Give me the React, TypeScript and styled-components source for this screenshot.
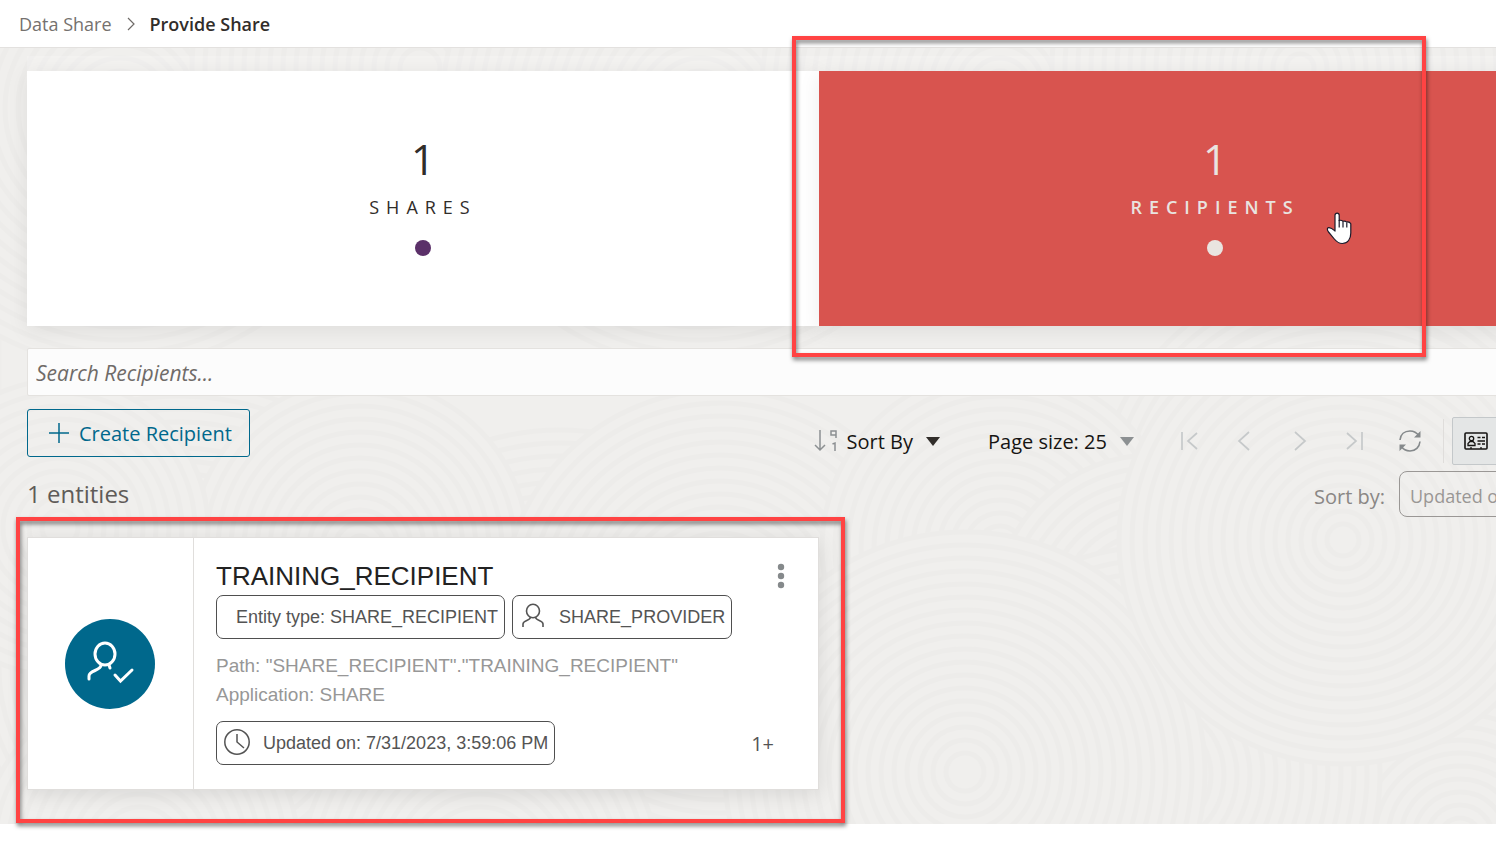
import React from "react";
import styled, { createGlobalStyle } from "styled-components";

const Global = createGlobalStyle`
  *, *::before, *::after { box-sizing: border-box; }
  html, body { margin: 0; padding: 0; }
  body {
    min-height: 100vh;
    background: #fff;
    color: #312d2a;
    font-family: "Open Sans", "Noto Sans", sans-serif;
    font-size: 20px;
  }
  button, input, select { font-family: inherit; margin: 0; }
`;

const Page = styled.div`
  min-height: 100vh;
  overflow-x: clip;
`;

const TopBar = styled.header`
  height: 48px;
  display: flex;
  align-items: center;
  padding: 0 19px;
  background: #fff;
  border-bottom: 1px solid #e3e1df;
`;

const Crumbs = styled.nav`
  display: flex;
  align-items: center;
  gap: 14px;
  font-size: 18px;
  line-height: 24px;
`;

const CrumbLink = styled.a`
  color: #75716e;
  text-decoration: none;
`;

const CrumbCurrent = styled.span`
  color: #312d2a;
  font-weight: 600;
`;

const Main = styled.main`
  position: relative;
  padding: 8px 0 34px 27px;
  background: #f0efed;
  box-shadow: inset 0 8px 8px -4px rgba(0, 0, 0, 0.06);
`;

const Backdrop = styled.svg`
  position: absolute;
  inset: 0;
  width: 100%;
  height: 100%;
`;

/* The content column runs past the right edge of the window. */
const Content = styled.div`
  position: relative;
  margin-right: -115px;
`;

const Tiles = styled.section`
  display: grid;
  grid-template-columns: 1fr 1fr;
  padding-top: 15px;
  background: rgba(255, 255, 255, 0.2);
`;

const Tile = styled.div<{ $active?: boolean }>`
  position: relative;
  height: 255px;
  padding-top: 64px;
  display: flex;
  flex-direction: column;
  align-items: center;
  background: ${(p) => (p.$active ? "#d8544f" : "#fff")};
  color: ${(p) => (p.$active ? "#e9e4e0" : "#312d2a")};
  font-weight: ${(p) => (p.$active ? 600 : 500)};
  box-shadow: 0 4px 20px rgba(0, 0, 0, 0.08);
`;

const TileCount = styled.span`
  font-size: 42px;
  line-height: 48px;
  font-weight: 400;
`;

const TileLabel = styled.span`
  margin-top: 12px;
  font-size: 18px;
  line-height: 24px;
  letter-spacing: 7px;
`;

const TileDot = styled.span<{ $color: string }>`
  width: 16px;
  height: 16px;
  margin-top: 21px;
  border-radius: 50%;
  background: ${(p) => p.$color};
`;

const Search = styled.input`
  display: block;
  width: 100%;
  height: 48px;
  margin-top: 22px;
  padding: 1px 8px 0;
  border: 1px solid #e4e2df;
  border-radius: 2px;
  background: #fcfcfc;
  font-size: 21px;
  font-style: italic;
  &::placeholder { color: #6f6b68; opacity: 1; }
`;

const Controls = styled.div`
  display: flex;
  justify-content: space-between;
  margin-top: 13px;
  height: 129px;
`;

const CreateButton = styled.button`
  display: flex;
  align-items: center;
  gap: 9px;
  height: 48px;
  padding: 0 17px 0 20px;
  border: 1px solid #00688c;
  border-radius: 3px;
  background: transparent;
  color: #00688c;
  font-size: 20px;
`;

const EntityCount = styled.p`
  margin: 21px 0 0;
  color: #5f5b58;
  font-size: 24px;
  line-height: 32px;
`;

const ToolColumn = styled.div`
  display: flex;
  flex-direction: column;
  align-items: flex-end;
  gap: 6px;
  padding-top: 8px;
`;

const Toolbar = styled.div`
  display: flex;
  align-items: center;
  height: 48px;
  padding-right: 111px;
`;

const MenuButton = styled.button`
  display: flex;
  align-items: center;
  gap: 9px;
  margin-right: 48px;
  padding: 0;
  border: 0;
  background: none;
  color: #161513;
  font-size: 20px;
`;

const Caret = styled.span<{ $color: string }>`
  margin-left: 4px;
  border: 7px solid transparent;
  border-top: 9px solid ${(p) => p.$color};
  border-bottom: 0;
`;

const PageSize = styled.label`
  display: flex;
  align-items: center;
  gap: 9px;
  margin-right: 28px;
`;

const PlainSelect = styled.select`
  appearance: none;
  padding: 0;
  border: 0;
  background: none;
  color: #161513;
  font-size: 20px;
`;

const NavButton = styled.button`
  display: flex;
  align-items: center;
  justify-content: center;
  width: 55px;
  height: 48px;
  padding: 0;
  border: 0;
  background: none;
`;

const Divider = styled.span`
  width: 1px;
  height: 44px;
  margin: 0 8px 0 6px;
  background: #dfdddb;
`;

const ViewButton = styled.button`
  display: flex;
  align-items: center;
  justify-content: center;
  width: 48px;
  height: 48px;
  padding: 0;
  border: 1px solid #c4c8ca;
  border-radius: 2px 0 0 2px;
  background: #e4e6e6;
`;

const SortRow = styled.div`
  display: flex;
  align-items: center;
  gap: 14px;
`;

const SortLabel = styled.label`
  padding-top: 5px;
  color: #8a8785;
  font-size: 20px;
`;

const SortSelect = styled.select`
  appearance: none;
  width: 212px;
  height: 46px;
  padding: 3px 10px 0;
  border: 1px solid #9a9795;
  border-radius: 8px;
  background: transparent;
  color: #9a9795;
  font-size: 18px;
`;

const Card = styled.article`
  position: relative;
  display: flex;
  width: 50%;
  margin-top: -1px;
  border: 1px solid #e0dedc;
  background: #fff;
  box-shadow: 0 4px 20px rgba(0, 0, 0, 0.1);
  font-family: "Liberation Sans", Arial, sans-serif;
`;

const CardSide = styled.div`
  display: flex;
  align-items: center;
  justify-content: center;
  width: 166px;
  padding-right: 1px;
  border-right: 1px solid #e0dedc;
`;

const Avatar = styled.span`
  display: flex;
  align-items: center;
  justify-content: center;
  width: 90px;
  height: 90px;
  border-radius: 50%;
  background: #00688c;
`;

const CardBody = styled.div`
  flex: 1;
  padding: 22px 33px 24px 22px;
`;

const CardHead = styled.div`
  display: flex;
  align-items: center;
  justify-content: space-between;
`;

const CardTitle = styled.h2`
  margin: 0;
  color: #222;
  font-size: 26px;
  font-weight: 400;
  line-height: 32px;
`;

const KebabButton = styled.button`
  display: flex;
  padding: 0;
  border: 0;
  background: none;
`;

const ChipRow = styled.div`
  display: flex;
  gap: 7px;
  margin-top: 3px;
`;

const Chip = styled.span<{ $gap?: number; $inset?: number }>`
  display: flex;
  align-items: center;
  gap: ${(p) => p.$gap ?? 0}px;
  height: 44px;
  padding: 0 6px 0 ${(p) => p.$inset ?? 6}px;
  border: 1px solid #4f4f4f;
  border-radius: 7px;
  color: #545454;
  font-size: 18px;
  white-space: nowrap;
`;

const Meta = styled.p`
  margin: 12px 0;
  color: #979797;
  font-size: 19px;
  line-height: 29px;
`;

const CardFoot = styled.div`
  display: flex;
  align-items: center;
  justify-content: space-between;
  padding-right: 11px;
`;

const More = styled.span`
  color: #545454;
  font-family: "Open Sans", sans-serif;
  font-size: 20px;
`;

const Highlight = styled.div<{ $wide?: boolean }>`
  position: absolute;
  z-index: 2;
  top: ${(p) => (p.$wide ? -21 : -35)}px;
  left: ${(p) => (p.$wide ? -12 : -27)}px;
  width: ${(p) => (p.$wide ? "calc(100% + 39px)" : "80%")};
  height: ${(p) => (p.$wide ? 306 : 321)}px;
  border: 4px solid #ff4343;
  filter: drop-shadow(1px 3px 2px rgba(0, 0, 0, 0.5));
  pointer-events: none;
`;

const Pointer = styled.svg`
  position: absolute;
  top: 140px;
  left: 507px;
`;

/* Overlapping ripple discs, painted back to front: x, y, radius. */
const RIPPLES = [
  [120, 60, 260], [420, 20, 230], [700, 60, 260], [1000, 40, 240], [1300, 20, 250],
  [180, 620, 300], [560, 640, 260], [360, 500, 170], [720, 560, 220], [60, 480, 150],
  [1343, 470, 250], [1000, 500, 180], [1152, 565, 160], [1460, 790, 230],
  [1152, 727, 230], [965, 724, 242], [1343, 492, 226],
  [140, 800, 160], [480, 820, 180],
];

function Ripples() {
  return (
    <Backdrop aria-hidden="true">
      {RIPPLES.map(([x, y, r], i) => (
        <g key={i} fill="none" stroke="#edecea" strokeWidth="5">
          <circle cx={x} cy={y} r={r} fill="#f0efed" stroke="none" />
          {Array.from({ length: Math.floor(r / 13) }, (_, k) => (
            <circle key={k} cx={x} cy={y} r={r - k * 13 - 2} />
          ))}
        </g>
      ))}
    </Backdrop>
  );
}

const NAV_ICONS = [
  { label: "First page", d: "M3 2v18M18 3l-9 8 9 8" },
  { label: "Previous page", d: "M15 2L5 11l10 9" },
  { label: "Next page", d: "M6 2l10 9-10 9" },
  { label: "Last page", d: "M3 3l9 8-9 8M18 2v18" },
];

export default function App() {
  return (
    <Page>
      <Global />
      <TopBar>
        <Crumbs aria-label="Breadcrumb">
          <CrumbLink href="#data-share">Data Share</CrumbLink>
          <svg width="10" height="16" viewBox="0 0 10 16" fill="none" stroke="#6f6b68" strokeWidth="1.2">
            <path d="M2 2l6 6-6 6" />
          </svg>
          <CrumbCurrent aria-current="page">Provide Share</CrumbCurrent>
        </Crumbs>
      </TopBar>
      <Main>
        <Ripples />
        <Content>
          <Tiles>
            <Tile>
              <TileCount>1</TileCount>
              <TileLabel>SHARES</TileLabel>
              <TileDot $color="#5b3069" />
            </Tile>
            <Tile $active>
              <TileCount>1</TileCount>
              <TileLabel>RECIPIENTS</TileLabel>
              <TileDot $color="#e9e4e0" />
              <Pointer width="26" height="34" viewBox="0 0 26 34" aria-hidden="true">
                <path
                  d="M9 20V4.200a2 2 0 0 1 4.200 0V9.500q2-.8 3.800.8 2-.8 3.800.8 2.600-.6 4 1.700V22c0 6-3 10.500-8.500 10.500-4 0-6-2-8-4.500L2.500 21C.8 18.600 1 16.500 3 16.700c2.400.2 4 1.600 6 3.300z"
                  fill="#fff" stroke="#1a1a2a" strokeWidth="1.200" strokeLinejoin="round"
                />
                <path d="M13.200 9v7.500M17 10.500v6M20.800 11.500v5" fill="none" stroke="#1a1a2a" strokeWidth="1.200" />
              </Pointer>
              <Highlight />
            </Tile>
          </Tiles>

          <Search type="search" aria-label="Search Recipients" placeholder="Search Recipients..." />

          <Controls>
            <div>
              <CreateButton type="button">
                <svg width="22" height="22" viewBox="0 0 22 22" stroke="#00688c" strokeWidth="1.500">
                  <path d="M11 1v20M1 11h20" />
                </svg>
                Create Recipient
              </CreateButton>
              <EntityCount>1 entities</EntityCount>
            </div>
            <ToolColumn>
              <Toolbar>
                <MenuButton type="button" aria-haspopup="menu">
                  <svg width="24" height="24" viewBox="0 0 24 24" fill="none" stroke="#8c9092" strokeWidth="1.500">
                    <path d="M6 1v20M1 16l5 5 5-5M22 9V2h-5v4h5M18.500 15l2.500-1v8" />
                  </svg>
                  Sort By
                  <Caret $color="#312d2a" />
                </MenuButton>
                <PageSize>
                  <PlainSelect aria-label="Page size" defaultValue="25">
                    <option value="25">Page size: 25</option>
                  </PlainSelect>
                  <Caret $color="#8c9092" />
                </PageSize>
                {NAV_ICONS.map((icon) => (
                  <NavButton key={icon.label} type="button" aria-label={icon.label}>
                    <svg width="22" height="22" viewBox="0 0 22 22" fill="none" stroke="#c6c9ca" strokeWidth="1.700">
                      <path d={icon.d} />
                    </svg>
                  </NavButton>
                ))}
                <NavButton type="button" aria-label="Refresh">
                  <svg width="24" height="24" viewBox="0 0 24 24" fill="none" stroke="#85898b" strokeWidth="1.600">
                    <path d="M2 11C2.500 5.500 6.500 2 12 2c4 0 7 2 9 5M22 12.500C21.500 18 17.500 22 12 22c-4 0-7-2-9-5" />
                    <path d="M22.500 2v6.500H16zM1.500 22v-6.500H8z" fill="#85898b" stroke="none" />
                  </svg>
                </NavButton>
                <Divider />
                <ViewButton type="button" aria-label="Card view" aria-pressed="true">
                  <svg width="24" height="18" viewBox="0 0 24 18" fill="none" stroke="#161513" strokeWidth="1.300">
                    <rect x="1" y="1" width="22" height="16" rx="1" strokeWidth="1.600" />
                    <circle cx="7.500" cy="6.500" r="2.200" />
                    <path d="M4 13.500v-2l2-2h3l2 2v2zM13.500 5.500h3M18 5.500h3M13.500 9h7.500M13.500 12h3M18 12h3M7 15v2M17 15v2" />
                  </svg>
                </ViewButton>
              </Toolbar>
              <SortRow>
                <SortLabel htmlFor="entity-sort">Sort by:</SortLabel>
                <SortSelect id="entity-sort" defaultValue="updated">
                  <option value="updated">Updated on</option>
                </SortSelect>
              </SortRow>
            </ToolColumn>
          </Controls>

          <Card>
            <CardSide>
              <Avatar>
                <svg width="50" height="46" viewBox="0 0 50 46" fill="none" stroke="#fff" strokeWidth="3" strokeLinecap="round">
                  <ellipse cx="20" cy="13" rx="10" ry="11" />
                  <path d="M16 24c0 6-12 5-12 11v3M24 24l1 3M30 34l5.500 6L47 29" />
                </svg>
              </Avatar>
            </CardSide>
            <CardBody>
              <CardHead>
                <CardTitle>TRAINING_RECIPIENT</CardTitle>
                <KebabButton type="button" aria-label="Actions">
                  <svg width="8" height="26" viewBox="0 0 8 26" fill="#85898b">
                    <circle cx="4" cy="4" r="3.200" />
                    <circle cx="4" cy="13" r="3.200" />
                    <circle cx="4" cy="22" r="3.200" />
                  </svg>
                </KebabButton>
              </CardHead>
              <ChipRow>
                <Chip $inset={19}>Entity type: SHARE_RECIPIENT</Chip>
                <Chip $inset={9} $gap={15}>
                  <svg width="22" height="28" viewBox="0 0 22 28" fill="none" stroke="#545454" strokeWidth="1.600">
                    <ellipse cx="11" cy="8" rx="6.500" ry="6.700" />
                    <path d="M8.500 14c0 4-7.500 3-7.500 7v3M13.500 14c0 4 7.500 3 7.500 7v3" />
                  </svg>
                  SHARE_PROVIDER
                </Chip>
              </ChipRow>
              <Meta>
                Path: "SHARE_RECIPIENT"."TRAINING_RECIPIENT"
                <br />
                Application: SHARE
              </Meta>
              <CardFoot>
                <Chip $gap={12}>
                  <svg width="28" height="28" viewBox="0 0 28 28" fill="none" stroke="#545454" strokeWidth="1.500">
                    <circle cx="14" cy="13" r="12.200" />
                    <path d="M14 5v8l7 6" />
                  </svg>
                  Updated on: 7/31/2023, 3:59:06 PM
                </Chip>
                <More>1+</More>
              </CardFoot>
            </CardBody>
            <Highlight $wide />
          </Card>
        </Content>
      </Main>
    </Page>
  );
}
